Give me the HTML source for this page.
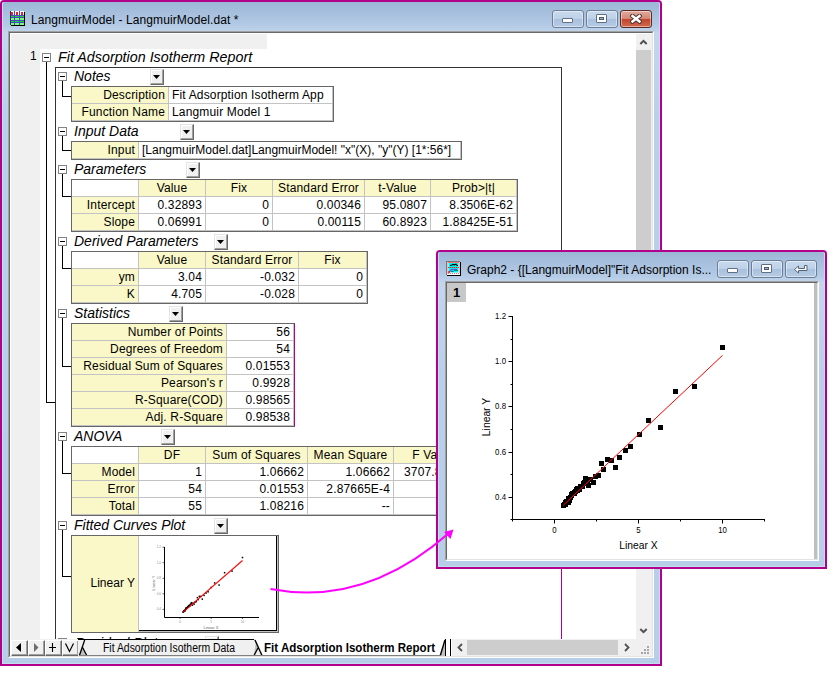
<!DOCTYPE html><html><head><meta charset="utf-8"><title>LangmuirModel</title><style>
html,body{margin:0;padding:0;background:#fff}
body{width:830px;height:673px;position:relative;overflow:hidden;font-family:"Liberation Sans",Arial,sans-serif;font-size:12px;color:#000}
.a{position:absolute}
.win{position:absolute;background:#b3008b;border-radius:4px 4px 0 0}
.frame{position:absolute;left:2px;top:2px;right:2px;bottom:2px;box-shadow:inset 1px 0 0 #c2def0,inset -1px 0 0 #c2def0,inset 0 -1px 0 #c2def0;border-radius:2px 2px 0 0;background:linear-gradient(180deg,#9cb6d6 0px,#b4cbe6 24px,#c3d6ec 31px,#b9d0ea 120px,#b7cee8 100%)}
.ttl{position:absolute;font-size:12px;white-space:nowrap;color:#000;letter-spacing:.1px}
.cbtn{position:absolute;height:16px;width:30px;border:1px solid #6d7f96;border-radius:3px;background:linear-gradient(180deg,#c9daed 0,#bdd1e8 48%,#a9c1de 52%,#b6cbe4 100%);box-shadow:inset 0 0 0 1px rgba(255,255,255,.45)}
.cbtn.x{border-color:#5d2a26;background:linear-gradient(180deg,#e0aa9c 0,#d28776 48%,#c2452c 52%,#cf6a50 100%)}
.tbl{position:absolute;background:#fff;border:1px solid #666;box-sizing:border-box}
.c{position:absolute;box-sizing:border-box;height:17px;line-height:16px;border-right:1px solid #c3c3c3;border-bottom:1px solid #c3c3c3;white-space:nowrap;overflow:hidden;padding:0 3px;font-size:12px;letter-spacing:.16px}.n{letter-spacing:0}
.y{background:#faf8c8}
.r{text-align:right}.l{text-align:left}.m{text-align:center}
.hd{position:absolute;font-style:italic;font-size:14px;white-space:nowrap;line-height:16px}
.box{position:absolute;width:7px;height:7px;border:1px solid #848484;background:#fff}
.box i{position:absolute;left:1px;top:3px;width:5px;height:1px;background:#000}
.dd{position:absolute;width:14px;height:16px;box-sizing:border-box;background:#f0f0f0;border-left:1px solid #e3e3e3;border-top:1px solid #e3e3e3;border-right:1px solid #696969;border-bottom:1px solid #696969;box-shadow:inset -1px -1px 0 #a0a0a0,inset 1px 1px 0 #fff}
.dd i{position:absolute;left:2px;top:5px;width:7px;height:4px;background:#000;clip-path:polygon(0 0,100% 0,50% 100%)}
.ln{position:absolute;background:#000}
</style></head><body>
<div class="win" style="left:0;top:0;width:662px;height:666px"><div class="frame"></div></div>
<svg class="a" style="left:10px;top:11px" width="16" height="16" viewBox="10 11 16 16" shape-rendering="crispEdges"><rect x="11" y="12" width="14" height="14" fill="#000"/><rect x="10" y="11" width="14" height="14" fill="#fff"/><rect x="10" y="16" width="14" height="1" fill="#10e030"/><rect x="10" y="21" width="14" height="1" fill="#10e030"/><rect x="10" y="18" width="14" height="2" fill="#78ff78"/><rect x="10" y="23" width="14" height="2" fill="#78ff78"/><rect x="11" y="12" width="2" height="3" fill="#f02020"/><rect x="16" y="12" width="2" height="3" fill="#f02020"/><rect x="21" y="12" width="2" height="3" fill="#f02020"/><g fill="#4a48c0"><rect x="10" y="15" width="14" height="1"/><rect x="10" y="17" width="14" height="1"/><rect x="10" y="20" width="14" height="1"/><rect x="10" y="22" width="14" height="1"/><rect x="14" y="11" width="1" height="14"/><rect x="19" y="11" width="1" height="14"/></g><rect x="10" y="11" width="1" height="14" fill="#303070"/></svg>
<div class="ttl" style="left:31px;top:13px;line-height:15px">LangmuirModel - LangmuirModel.dat *</div>
<div class="cbtn" style="left:552px;top:10px"><i class="a" style="left:9px;top:7px;width:9px;height:3px;background:#fff;border:1px solid #5f6f86;border-radius:1px"></i></div>
<div class="cbtn" style="left:586px;top:10px"><i class="a" style="left:9px;top:3px;width:9px;height:7px;background:#fff;border:1px solid #5f6f86;border-radius:1px"><i class="a" style="left:2px;top:2px;width:5px;height:3px;box-sizing:border-box;border:1px solid #4c5a70;background:#9db3d0"></i></i></div>
<div class="cbtn x" style="left:620px;top:10px"><svg class="a" style="left:9px;top:3px" width="12" height="10" viewBox="0 0 12 10"><path d="M2.500 2L9.500 7.500M9.500 2L2.500 7.500" stroke="#4a3030" stroke-width="4.4" stroke-linecap="square"/><path d="M2.500 2L9.500 7.500M9.500 2L2.500 7.500" stroke="#fff" stroke-width="2.500" stroke-linecap="square"/></svg></div>
<div class="a" style="left:8px;top:31px;width:646px;height:627px;background:#f0f0f0;box-sizing:border-box;border:1px solid;border-color:#a0a0a0 #fff #fff #a0a0a0"></div>
<div class="a" style="left:9px;top:32px;width:644px;height:625px;box-sizing:border-box;border:1px solid;border-color:#696969 #e3e3e3 #e3e3e3 #696969"></div>
<div class="a" style="left:10px;top:33px;width:1px;height:623px;background:#fff"></div>
<div class="a" style="left:10px;top:33px;width:642px;height:1px;background:#fff"></div>
<div class="a" style="left:40px;top:49px;width:596px;height:590px;background:#fff"></div>
<div class="a" style="left:267px;top:34px;width:369px;height:15px;background:#fff"></div>
<div class="a" style="left:30px;top:49px;font-size:12px;line-height:14px">1</div>
<div class="box" style="left:42px;top:53px"><i></i></div>
<div class="hd" style="left:58px;top:49px;font-size:14.3px">Fit Adsorption Isotherm Report</div>
<div class="ln" style="left:46px;top:62px;width:1px;height:341px"></div>
<div class="ln" style="left:46px;top:402px;width:9px;height:1px"></div>
<div class="a" style="left:55px;top:67px;width:507px;height:572px;border:1px solid #333;border-bottom:none;box-sizing:border-box"></div>
<div class="box" style="left:58px;top:72px"><i></i></div>
<div class="hd" style="left:74px;top:68px">Notes</div>
<div class="dd" style="left:150px;top:69px"><i></i></div>
<div class="ln" style="left:62px;top:81px;width:1px;height:16px"></div>
<div class="ln" style="left:62px;top:96px;width:9px;height:1px"></div>
<div class="tbl" style="left:71px;top:86px;width:263px;height:36px;">
<div class="c y r" style="left:0px;top:0px;width:97px">Description</div>
<div class="c l" style="left:97px;top:0px;width:164px">Fit Adsorption Isotherm App</div>
<div class="c y r" style="left:0px;top:17px;width:97px">Function Name</div>
<div class="c l" style="left:97px;top:17px;width:164px">Langmuir Model 1</div>
</div>
<div class="box" style="left:58px;top:127px"><i></i></div>
<div class="hd" style="left:74px;top:123px">Input Data</div>
<div class="dd" style="left:180px;top:124px"><i></i></div>
<div class="ln" style="left:62px;top:136px;width:1px;height:15px"></div>
<div class="ln" style="left:62px;top:150px;width:9px;height:1px"></div>
<div class="tbl" style="left:71px;top:141px;width:391px;height:19px;">
<div class="c y r" style="left:0px;top:0px;width:67px">Input</div>
<div class="c l n" style="left:67px;top:0px;width:322px">[LangmuirModel.dat]LangmuirModel! "x"(X), "y"(Y) [1*:56*]</div>
</div>
<div class="box" style="left:58px;top:165px"><i></i></div>
<div class="hd" style="left:74px;top:161px">Parameters</div>
<div class="dd" style="left:186px;top:162px"><i></i></div>
<div class="ln" style="left:62px;top:174px;width:1px;height:23px"></div>
<div class="ln" style="left:62px;top:196px;width:9px;height:1px"></div>
<div class="tbl" style="left:71px;top:179px;width:447px;height:53px;">
<div class="c l" style="left:0px;top:0px;width:67px"></div>
<div class="c y m" style="left:67px;top:0px;width:67px">Value</div>
<div class="c y m" style="left:134px;top:0px;width:67px">Fix</div>
<div class="c y m" style="left:201px;top:0px;width:92px">Standard Error</div>
<div class="c y m" style="left:293px;top:0px;width:66px">t-Value</div>
<div class="c y m" style="left:359px;top:0px;width:86px">Prob&gt;|t|</div>
<div class="c y r" style="left:0px;top:17px;width:67px">Intercept</div>
<div class="c r" style="left:67px;top:17px;width:67px">0.32893</div>
<div class="c r" style="left:134px;top:17px;width:67px">0</div>
<div class="c r" style="left:201px;top:17px;width:92px">0.00346</div>
<div class="c r" style="left:293px;top:17px;width:66px">95.0807</div>
<div class="c r" style="left:359px;top:17px;width:86px">8.3506E-62</div>
<div class="c y r" style="left:0px;top:34px;width:67px">Slope</div>
<div class="c r" style="left:67px;top:34px;width:67px">0.06991</div>
<div class="c r" style="left:134px;top:34px;width:67px">0</div>
<div class="c r" style="left:201px;top:34px;width:92px">0.00115</div>
<div class="c r" style="left:293px;top:34px;width:66px">60.8923</div>
<div class="c r" style="left:359px;top:34px;width:86px">1.88425E-51</div>
</div>
<div class="box" style="left:58px;top:237px"><i></i></div>
<div class="hd" style="left:74px;top:233px">Derived Parameters</div>
<div class="dd" style="left:214px;top:234px"><i></i></div>
<div class="ln" style="left:62px;top:246px;width:1px;height:23px"></div>
<div class="ln" style="left:62px;top:268px;width:9px;height:1px"></div>
<div class="tbl" style="left:71px;top:251px;width:297px;height:53px;">
<div class="c l" style="left:0px;top:0px;width:67px"></div>
<div class="c y m" style="left:67px;top:0px;width:67px">Value</div>
<div class="c y m" style="left:134px;top:0px;width:93px">Standard Error</div>
<div class="c y m" style="left:227px;top:0px;width:68px">Fix</div>
<div class="c y r" style="left:0px;top:17px;width:67px">ym</div>
<div class="c r" style="left:67px;top:17px;width:67px">3.04</div>
<div class="c r" style="left:134px;top:17px;width:93px">-0.032</div>
<div class="c r" style="left:227px;top:17px;width:68px">0</div>
<div class="c y r" style="left:0px;top:34px;width:67px">K</div>
<div class="c r" style="left:67px;top:34px;width:67px">4.705</div>
<div class="c r" style="left:134px;top:34px;width:93px">-0.028</div>
<div class="c r" style="left:227px;top:34px;width:68px">0</div>
</div>
<div class="box" style="left:58px;top:309px"><i></i></div>
<div class="hd" style="left:74px;top:305px">Statistics</div>
<div class="dd" style="left:169px;top:306px"><i></i></div>
<div class="ln" style="left:62px;top:318px;width:1px;height:49px"></div>
<div class="ln" style="left:62px;top:366px;width:9px;height:1px"></div>
<div class="tbl" style="left:71px;top:323px;width:224px;height:104px;border-right-color:#b3008b">
<div class="c y r" style="left:0px;top:0px;width:155px">Number of Points</div>
<div class="c r" style="left:155px;top:0px;width:67px">56</div>
<div class="c y r" style="left:0px;top:17px;width:155px">Degrees of Freedom</div>
<div class="c r" style="left:155px;top:17px;width:67px">54</div>
<div class="c y r" style="left:0px;top:34px;width:155px">Residual Sum of Squares</div>
<div class="c r" style="left:155px;top:34px;width:67px">0.01553</div>
<div class="c y r" style="left:0px;top:51px;width:155px">Pearson's r</div>
<div class="c r" style="left:155px;top:51px;width:67px">0.9928</div>
<div class="c y r" style="left:0px;top:68px;width:155px">R-Square(COD)</div>
<div class="c r" style="left:155px;top:68px;width:67px">0.98565</div>
<div class="c y r" style="left:0px;top:85px;width:155px">Adj. R-Square</div>
<div class="c r" style="left:155px;top:85px;width:67px">0.98538</div>
</div>
<div class="box" style="left:58px;top:432px"><i></i></div>
<div class="hd" style="left:74px;top:428px">ANOVA</div>
<div class="dd" style="left:161px;top:429px"><i></i></div>
<div class="ln" style="left:62px;top:441px;width:1px;height:33px"></div>
<div class="ln" style="left:62px;top:473px;width:9px;height:1px"></div>
<div class="tbl" style="left:71px;top:446px;width:471px;height:70px;">
<div class="c l" style="left:0px;top:0px;width:67px"></div>
<div class="c y m" style="left:67px;top:0px;width:67px">DF</div>
<div class="c y m" style="left:134px;top:0px;width:102px">Sum of Squares</div>
<div class="c y m" style="left:236px;top:0px;width:86px">Mean Square</div>
<div class="c y m" style="left:322px;top:0px;width:79px">F Value</div>
<div class="c y m" style="left:401px;top:0px;width:68px">Prob&gt;F</div>
<div class="c y r" style="left:0px;top:17px;width:67px">Model</div>
<div class="c r" style="left:67px;top:17px;width:67px">1</div>
<div class="c r" style="left:134px;top:17px;width:102px">1.06662</div>
<div class="c r" style="left:236px;top:17px;width:86px">1.06662</div>
<div class="c r" style="left:322px;top:17px;width:79px">3707.85306</div>
<div class="c r" style="left:401px;top:17px;width:68px">0</div>
<div class="c y r" style="left:0px;top:34px;width:67px">Error</div>
<div class="c r" style="left:67px;top:34px;width:67px">54</div>
<div class="c r" style="left:134px;top:34px;width:102px">0.01553</div>
<div class="c r" style="left:236px;top:34px;width:86px">2.87665E-4</div>
<div class="c r" style="left:322px;top:34px;width:79px"></div>
<div class="c r" style="left:401px;top:34px;width:68px"></div>
<div class="c y r" style="left:0px;top:51px;width:67px">Total</div>
<div class="c r" style="left:67px;top:51px;width:67px">55</div>
<div class="c r" style="left:134px;top:51px;width:102px">1.08216</div>
<div class="c r" style="left:236px;top:51px;width:86px">--</div>
<div class="c r" style="left:322px;top:51px;width:79px"></div>
<div class="c r" style="left:401px;top:51px;width:68px"></div>
</div>
<div class="box" style="left:58px;top:521px"><i></i></div>
<div class="hd" style="left:74px;top:517px">Fitted Curves Plot</div>
<div class="dd" style="left:214px;top:518px"><i></i></div>
<div class="ln" style="left:62px;top:530px;width:1px;height:47px"></div>
<div class="ln" style="left:62px;top:576px;width:9px;height:1px"></div>
<div class="tbl" style="left:71px;top:535px;width:208px;height:98px;background:#faf8c8">
<div class="a r" style="left:0;top:39px;width:63px;line-height:16px;font-size:12px">Linear Y</div>
<div class="a" style="left:66px;top:0;width:140px;height:96px;background:#fff;border:1px solid #c3c3c3;border-top:none;box-sizing:border-box"><div class="a" style="left:0;top:0;width:138px;height:95px;box-sizing:border-box;border-right:1px solid #000;border-bottom:1px solid #000"></div></div>
</div>
<svg class="a" style="left:139px;top:536px" width="137" height="94" viewBox="139 536 137 94" font-family="Liberation Sans,Arial,sans-serif">
<path d="M164.500 547V617.500H259" fill="none" stroke="#000" stroke-width="1"/>
<rect x="241.74" y="556.77" width="1.500" height="1.500" fill="#000"/>
<rect x="231.30" y="570.38" width="1.500" height="1.500" fill="#000"/>
<rect x="223.86" y="571.93" width="1.500" height="1.500" fill="#000"/>
<rect x="218.30" y="584.30" width="1.500" height="1.500" fill="#000"/>
<rect x="213.92" y="582.20" width="1.500" height="1.500" fill="#000"/>
<rect x="210.49" y="586.71" width="1.500" height="1.500" fill="#000"/>
<rect x="207.36" y="591.07" width="1.500" height="1.500" fill="#000"/>
<rect x="205.30" y="592.31" width="1.500" height="1.500" fill="#000"/>
<rect x="203.30" y="594.64" width="1.500" height="1.500" fill="#000"/>
<rect x="201.55" y="598.38" width="1.500" height="1.500" fill="#000"/>
<rect x="200.05" y="595.66" width="1.500" height="1.500" fill="#000"/>
<rect x="198.61" y="595.58" width="1.500" height="1.500" fill="#000"/>
<rect x="197.36" y="598.92" width="1.500" height="1.500" fill="#000"/>
<rect x="196.61" y="596.90" width="1.500" height="1.500" fill="#000"/>
<rect x="195.48" y="600.87" width="1.500" height="1.500" fill="#000"/>
<rect x="194.23" y="601.41" width="1.500" height="1.500" fill="#000"/>
<rect x="193.42" y="603.36" width="1.500" height="1.500" fill="#000"/>
<rect x="191.73" y="604.37" width="1.500" height="1.500" fill="#000"/>
<rect x="190.61" y="601.96" width="1.500" height="1.500" fill="#000"/>
<rect x="191.11" y="602.58" width="1.500" height="1.500" fill="#000"/>
<rect x="192.36" y="602.42" width="1.500" height="1.500" fill="#000"/>
<rect x="182.36" y="611.42" width="1.500" height="1.500" fill="#000"/>
<rect x="182.64" y="610.84" width="1.500" height="1.500" fill="#000"/>
<rect x="182.92" y="610.79" width="1.500" height="1.500" fill="#000"/>
<rect x="183.20" y="610.29" width="1.500" height="1.500" fill="#000"/>
<rect x="183.48" y="610.02" width="1.500" height="1.500" fill="#000"/>
<rect x="183.76" y="610.39" width="1.500" height="1.500" fill="#000"/>
<rect x="184.05" y="610.20" width="1.500" height="1.500" fill="#000"/>
<rect x="184.33" y="609.06" width="1.500" height="1.500" fill="#000"/>
<rect x="184.61" y="609.44" width="1.500" height="1.500" fill="#000"/>
<rect x="184.89" y="608.52" width="1.500" height="1.500" fill="#000"/>
<rect x="185.17" y="607.45" width="1.500" height="1.500" fill="#000"/>
<rect x="185.45" y="607.78" width="1.500" height="1.500" fill="#000"/>
<rect x="185.73" y="607.13" width="1.500" height="1.500" fill="#000"/>
<rect x="186.01" y="607.28" width="1.500" height="1.500" fill="#000"/>
<rect x="186.30" y="606.86" width="1.500" height="1.500" fill="#000"/>
<rect x="186.58" y="607.15" width="1.500" height="1.500" fill="#000"/>
<rect x="186.86" y="606.38" width="1.500" height="1.500" fill="#000"/>
<rect x="187.14" y="605.88" width="1.500" height="1.500" fill="#000"/>
<rect x="187.42" y="606.01" width="1.500" height="1.500" fill="#000"/>
<rect x="187.70" y="605.53" width="1.500" height="1.500" fill="#000"/>
<rect x="187.98" y="605.36" width="1.500" height="1.500" fill="#000"/>
<rect x="188.26" y="605.77" width="1.500" height="1.500" fill="#000"/>
<rect x="188.55" y="604.77" width="1.500" height="1.500" fill="#000"/>
<rect x="188.83" y="604.71" width="1.500" height="1.500" fill="#000"/>
<rect x="189.11" y="604.78" width="1.500" height="1.500" fill="#000"/>
<rect x="189.39" y="604.83" width="1.500" height="1.500" fill="#000"/>
<rect x="189.67" y="603.68" width="1.500" height="1.500" fill="#000"/>
<rect x="189.95" y="603.86" width="1.500" height="1.500" fill="#000"/>
<rect x="190.23" y="603.35" width="1.500" height="1.500" fill="#000"/>
<path d="M183.1 612.2L242.5 560.5" stroke="#f00" stroke-width="1.050"/>
<path d="M162.5 547.2h2" stroke="#000" stroke-width=".6"/><text x="161" y="548.2" font-size="3" text-anchor="end" fill="#888">1.2</text>
<path d="M162.5 562.7h2" stroke="#000" stroke-width=".6"/><text x="161" y="563.7" font-size="3" text-anchor="end" fill="#888">1.0</text>
<path d="M162.5 578.3h2" stroke="#000" stroke-width=".6"/><text x="161" y="579.3" font-size="3" text-anchor="end" fill="#888">0.8</text>
<path d="M162.5 593.8h2" stroke="#000" stroke-width=".6"/><text x="161" y="594.8" font-size="3" text-anchor="end" fill="#888">0.6</text>
<path d="M162.5 609.4h2" stroke="#000" stroke-width=".6"/><text x="161" y="610.4" font-size="3" text-anchor="end" fill="#888">0.4</text>
<path d="M180.0 617v2" stroke="#000" stroke-width=".6"/><text x="180.0" y="623" font-size="3" text-anchor="middle" fill="#888">0</text>
<path d="M211.2 617v2" stroke="#000" stroke-width=".6"/><text x="211.2" y="623" font-size="3" text-anchor="middle" fill="#888">5</text>
<path d="M242.5 617v2" stroke="#000" stroke-width=".6"/><text x="242.5" y="623" font-size="3" text-anchor="middle" fill="#888">10</text>
<text x="211" y="628.5" font-size="4" text-anchor="middle" fill="#666">Linear X</text>
<text transform="translate(155,583) rotate(-90)" font-size="4" text-anchor="middle" fill="#666">Linear Y</text>
</svg>
<div class="a" style="left:561px;top:560px;width:1px;height:79px;background:#b3008b"></div>
<div class="a" style="left:56px;top:634px;width:505px;height:5px;overflow:hidden"><div class="hd" style="left:19px;top:1px">Residual Plots</div><div class="box" style="left:2px;top:4px"></div><div class="dd" style="left:149px;top:2px"></div></div>
<div class="a" style="left:636px;top:34px;width:16px;height:606px;background:#f0f0f0"></div>
<div class="a" style="left:636px;top:50px;width:15px;height:350px;background:#cdcdcd"></div>
<svg class="a" style="left:636px;top:34px" width="16" height="16"><path d="M4.300 10L7.500 6.800L10.700 10" fill="none" stroke="#505050" stroke-width="2"/></svg>
<svg class="a" style="left:636px;top:623px" width="16" height="16"><path d="M4.300 6L7.500 9.200L10.700 6" fill="none" stroke="#505050" stroke-width="2"/></svg>
<div class="a" style="left:11px;top:640px;width:641px;height:16px;background:#f0f0f0"></div>
<div class="a" style="left:11px;top:640px;width:17px;height:16px;box-sizing:border-box;background:#f0f0f0;border:1px solid #fff;border-right-color:#696969;border-bottom-color:#696969;box-shadow:inset -1px -1px 0 #a0a0a0"></div>
<div class="a" style="left:28px;top:640px;width:17px;height:16px;box-sizing:border-box;background:#f0f0f0;border:1px solid #fff;border-right-color:#696969;border-bottom-color:#696969;box-shadow:inset -1px -1px 0 #a0a0a0"></div>
<div class="a" style="left:45px;top:640px;width:17px;height:16px;box-sizing:border-box;background:#f0f0f0;border:1px solid #fff;border-right-color:#696969;border-bottom-color:#696969;box-shadow:inset -1px -1px 0 #a0a0a0"></div>
<div class="a" style="left:62px;top:640px;width:17px;height:16px;box-sizing:border-box;background:#f0f0f0;border:1px solid #fff;border-right-color:#696969;border-bottom-color:#696969;box-shadow:inset -1px -1px 0 #a0a0a0"></div>
<svg class="a" style="left:0;top:636px" width="662" height="24" viewBox="0 636 662 24"><path d="M21 643V652L16 647.500Z" fill="#000"/><path d="M34 643V652L38.500 647.500Z" fill="#6d6d6d"/><path d="M49 647.500H56M52.500 643V652" stroke="#000" stroke-width="1.100"/><path d="M65.500 643.500L69.500 651.500L73.500 643.500" fill="none" stroke="#000" stroke-width="1.200"/><rect x="79" y="640" width="372" height="16" fill="#c0c0c0"/><path d="M78 640H84.500L79.400 656H78Z" fill="#f0f0f0"/><path d="M80 639.500H255L262 656H86.800L82 646Z" fill="#f0f0f0"/><path d="M254 656L258 648L262 640H256Z" fill="#c0c0c0"/><path d="M255 638H446L440.500 656H262Z" fill="#fff"/><rect x="446" y="639" width="6" height="17" fill="#fff"/><path d="M78 639.500H254" stroke="#000" stroke-width="1"/><path d="M84.700 640L79.400 655.500" stroke="#000" stroke-width="1.300"/><path d="M82.300 647L86.800 655.500" stroke="#000" stroke-width="1.300"/><path d="M255 640L262 655.500" stroke="#000" stroke-width="1.400"/><path d="M258 648L254 655.500" stroke="#000" stroke-width="1.300"/><path d="M445 640L440.300 655.500" stroke="#000" stroke-width="1.400"/><path d="M445.500 639V656M450.500 639V656" stroke="#000" stroke-width="1"/><path d="M79 655.500H441" stroke="#808080" stroke-width="1"/></svg>
<div class="a tab" style="left:103px;top:641px;font-size:12px;line-height:15px;white-space:nowrap;transform-origin:0 0;transform:scaleX(.868)">Fit Adsorption Isotherm Data</div>
<div class="a tab" style="left:264px;top:641px;font-size:12px;line-height:15px;font-weight:bold;white-space:nowrap;transform-origin:0 0;transform:scaleX(.963)">Fit Adsorption Isotherm Report</div>
<div class="a" style="left:452px;top:640px;width:184px;height:16px;background:#f0f0f0"></div>
<div class="a" style="left:467px;top:640px;width:151px;height:15px;background:#cdcdcd"></div>
<svg class="a" style="left:452px;top:640px" width="16" height="16"><path d="M10 4L6.500 7.500L10 11" fill="none" stroke="#505050" stroke-width="1.800"/></svg>
<svg class="a" style="left:619px;top:640px" width="16" height="16"><path d="M6 4L9.500 7.500L6 11" fill="none" stroke="#505050" stroke-width="1.800"/></svg>
<svg class="a" style="left:638px;top:642px" width="14" height="14" viewBox="638 642 14 14"><g fill="#a8a8a8"><rect x="647" y="646" width="2" height="2"/><rect x="644" y="649" width="2" height="2"/><rect x="647" y="649" width="2" height="2"/><rect x="641" y="652" width="2" height="2"/><rect x="644" y="652" width="2" height="2"/><rect x="647" y="652" width="2" height="2"/></g></svg>
<div class="win" style="left:436px;top:250px;width:391px;height:319px"><div class="frame"></div></div>
<svg class="a" style="left:446px;top:261px" width="16" height="16" viewBox="446 261 16 16"><rect x="447" y="262" width="14" height="14" fill="#000"/><rect x="446" y="261" width="14" height="14" fill="#fff"/><path d="M446 261.500H460M446.500 261V275" stroke="#777" stroke-width="1"/><rect x="448" y="262" width="11" height="1" fill="#ff7070"/><rect x="448.500" y="263" width="10" height="9.500" fill="#00f4f4"/><path d="M447.500 262.500V274M448 273.500H459M459.500 262.500V273" stroke="#ff6a6a" stroke-width="1" stroke-dasharray="1 1" fill="none"/><path d="M448 267.500H459" stroke="#e82020" stroke-width="1" stroke-dasharray="1.300 .7"/><path d="M450 265.500L452 265L453 264.500L454.500 264.800L456 264.300L457 265.300L458 265.500" stroke="#000" stroke-width="1.200" fill="none"/><path d="M449.500 271.500Q451 269.200 453.500 269.300L457 269.500" stroke="#7048e0" stroke-width="1.100" fill="none"/><path d="M451 271.300H453.500M454 270.300H458" stroke="#104040" stroke-width=".8"/><rect x="448" y="271.300" width="2" height="1.400" fill="#f00020"/></svg>
<div class="ttl" style="left:467px;top:263px;line-height:15px;letter-spacing:0">Graph2 - {[LangmuirModel]"Fit Adsorption Is...</div>
<div class="cbtn" style="left:717px;top:260px"><i class="a" style="left:9px;top:7px;width:9px;height:3px;background:#fff;border:1px solid #5f6f86;border-radius:1px"></i></div>
<div class="cbtn" style="left:751px;top:260px"><i class="a" style="left:9px;top:3px;width:9px;height:7px;background:#fff;border:1px solid #5f6f86;border-radius:1px"><i class="a" style="left:2px;top:2px;width:5px;height:3px;box-sizing:border-box;border:1px solid #4c5a70;background:#9db3d0"></i></i></div>
<div class="cbtn" style="left:785px;top:260px"><svg class="a" style="left:7px;top:3px" width="16" height="11" viewBox="0 0 16 11"><path d="M14 1.5V6.5H5.5V9L1.5 5.5L5.5 2V4.500H11.5V1.5Z" fill="#fff" stroke="#56657a" stroke-width="1"/></svg></div>
<div class="a" style="left:445px;top:281px;width:374px;height:280px;background:#fff;box-sizing:border-box;border:1px solid;border-color:#a0a0a0 #fff #fff #a0a0a0"></div>
<div class="a" style="left:446px;top:282px;width:372px;height:278px;box-sizing:border-box;border:1px solid;border-color:#696969 #e3e3e3 #e3e3e3 #696969"></div>
<div class="a" style="left:814px;top:283px;width:3px;height:276px;background:#bfbfbf"></div>
<div class="a m" style="left:447px;top:283px;width:19px;height:19px;background:#c8c8c8;font-weight:bold;font-size:13px;line-height:19px">1</div>
<svg class="a" style="left:470px;top:300px" width="330" height="258" viewBox="470 300 330 258" font-family="Liberation Sans,Arial,sans-serif">
<path d="M512.5 316V519.5H765" fill="none" stroke="#000" stroke-width="1"/>
<path d="M508.500 316.5h4" stroke="#000"/><text transform="translate(506,318.5) scale(.87,1)" font-size="9" text-anchor="end">1.2</text>
<path d="M508.500 361.5h4" stroke="#000"/><text transform="translate(506,363.5) scale(.87,1)" font-size="9" text-anchor="end">1.0</text>
<path d="M508.500 406.5h4" stroke="#000"/><text transform="translate(506,408.5) scale(.87,1)" font-size="9" text-anchor="end">0.8</text>
<path d="M508.500 452.5h4" stroke="#000"/><text transform="translate(506,454.5) scale(.87,1)" font-size="9" text-anchor="end">0.6</text>
<path d="M508.500 497.5h4" stroke="#000"/><text transform="translate(506,499.5) scale(.87,1)" font-size="9" text-anchor="end">0.4</text>
<path d="M510.500 339.5h2" stroke="#000"/>
<path d="M510.500 384.5h2" stroke="#000"/>
<path d="M510.500 429.5h2" stroke="#000"/>
<path d="M510.500 474.5h2" stroke="#000"/>
<path d="M510.500 519.5h2" stroke="#000"/>
<path d="M554.5 519.5v4" stroke="#000"/><text transform="translate(554.5,533.200) scale(.87,1)" font-size="9" text-anchor="middle">0</text>
<path d="M638.5 519.5v4" stroke="#000"/><text transform="translate(638.5,533.200) scale(.87,1)" font-size="9" text-anchor="middle">5</text>
<path d="M722.5 519.5v4" stroke="#000"/><text transform="translate(722.5,533.200) scale(.87,1)" font-size="9" text-anchor="middle">10</text>
<path d="M512.5 519.5v2" stroke="#000"/>
<path d="M596.5 519.5v2" stroke="#000"/>
<path d="M680.5 519.5v2" stroke="#000"/>
<path d="M764.5 519.5v2" stroke="#000"/>
<rect x="720" y="345" width="5" height="5" fill="#000"/>
<rect x="692" y="384" width="5" height="5" fill="#000"/>
<rect x="673" y="389" width="5" height="5" fill="#000"/>
<rect x="658" y="425" width="5" height="5" fill="#000"/>
<rect x="646" y="418" width="5" height="5" fill="#000"/>
<rect x="637" y="432" width="5" height="5" fill="#000"/>
<rect x="628" y="444" width="5" height="5" fill="#000"/>
<rect x="623" y="448" width="5" height="5" fill="#000"/>
<rect x="617" y="455" width="5" height="5" fill="#000"/>
<rect x="613" y="465" width="5" height="5" fill="#000"/>
<rect x="609" y="458" width="5" height="5" fill="#000"/>
<rect x="605" y="457" width="5" height="5" fill="#000"/>
<rect x="601" y="467" width="5" height="5" fill="#000"/>
<rect x="599" y="461" width="5" height="5" fill="#000"/>
<rect x="596" y="473" width="5" height="5" fill="#000"/>
<rect x="593" y="474" width="5" height="5" fill="#000"/>
<rect x="591" y="480" width="5" height="5" fill="#000"/>
<rect x="586" y="483" width="5" height="5" fill="#000"/>
<rect x="583" y="476" width="5" height="5" fill="#000"/>
<rect x="585" y="478" width="5" height="5" fill="#000"/>
<rect x="588" y="477" width="5" height="5" fill="#000"/>
<rect x="561" y="503" width="5" height="5" fill="#000"/>
<rect x="562" y="502" width="5" height="5" fill="#000"/>
<rect x="563" y="502" width="5" height="5" fill="#000"/>
<rect x="563" y="500" width="5" height="5" fill="#000"/>
<rect x="564" y="499" width="5" height="5" fill="#000"/>
<rect x="565" y="500" width="5" height="5" fill="#000"/>
<rect x="566" y="500" width="5" height="5" fill="#000"/>
<rect x="566" y="496" width="5" height="5" fill="#000"/>
<rect x="567" y="498" width="5" height="5" fill="#000"/>
<rect x="568" y="495" width="5" height="5" fill="#000"/>
<rect x="569" y="492" width="5" height="5" fill="#000"/>
<rect x="569" y="493" width="5" height="5" fill="#000"/>
<rect x="570" y="491" width="5" height="5" fill="#000"/>
<rect x="571" y="491" width="5" height="5" fill="#000"/>
<rect x="572" y="490" width="5" height="5" fill="#000"/>
<rect x="572" y="491" width="5" height="5" fill="#000"/>
<rect x="573" y="489" width="5" height="5" fill="#000"/>
<rect x="574" y="487" width="5" height="5" fill="#000"/>
<rect x="575" y="488" width="5" height="5" fill="#000"/>
<rect x="575" y="486" width="5" height="5" fill="#000"/>
<rect x="576" y="486" width="5" height="5" fill="#000"/>
<rect x="577" y="487" width="5" height="5" fill="#000"/>
<rect x="578" y="484" width="5" height="5" fill="#000"/>
<rect x="578" y="484" width="5" height="5" fill="#000"/>
<rect x="579" y="484" width="5" height="5" fill="#000"/>
<rect x="580" y="484" width="5" height="5" fill="#000"/>
<rect x="581" y="481" width="5" height="5" fill="#000"/>
<rect x="581" y="481" width="5" height="5" fill="#000"/>
<rect x="582" y="480" width="5" height="5" fill="#000"/>
<path d="M563.1 505.4L722.5 355.4" stroke="#f00" stroke-width="1"/>
<text transform="translate(638.500,549.300) scale(.94,1)" font-size="11" text-anchor="middle">Linear X</text>
<text transform="translate(490,417) rotate(-90) scale(.94,1)" font-size="11" text-anchor="middle">Linear Y</text>
</svg>
<svg class="a" style="left:260px;top:510px" width="210" height="100" viewBox="260 510 210 100"><path d="M270.6 589Q365 607 449 533" fill="none" stroke="#ff00ff" stroke-width="2"/><path d="M453.5 529.5L450.5 539L444 532Z" fill="#ff00ff"/></svg>
</body></html>
